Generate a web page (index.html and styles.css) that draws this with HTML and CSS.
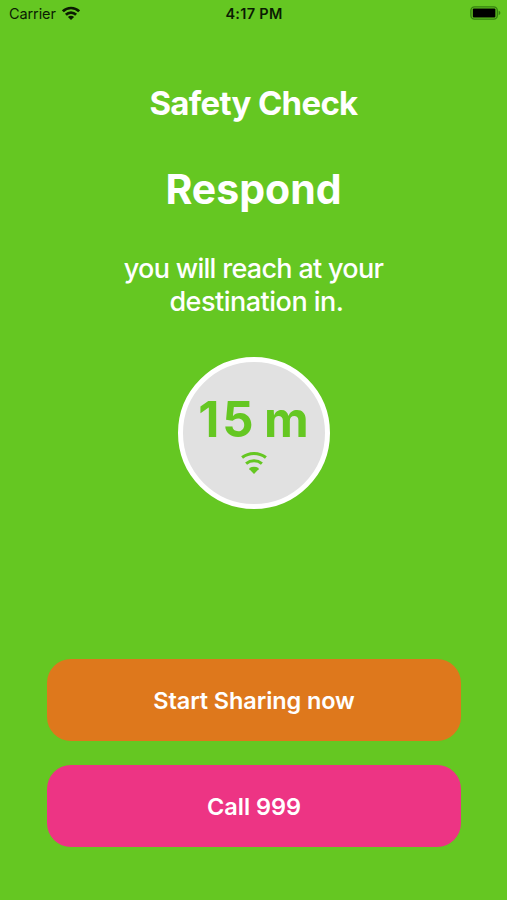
FILE: index.html
```html
<!DOCTYPE html>
<html lang="en">
<head>
  <meta charset="UTF-8">
  <title>Safety Check</title>
  <link rel="stylesheet" href="styles.css">
</head>
<body>
  <div class="status-bar">
    <div class="carrier">
      <span>Carrier</span>
      <svg class="status-wifi" viewBox="0 0 18 14" fill="none" stroke="#0b1c02" stroke-width="2.7">
        <path d="M0.9 5.3a11.6 11.6 0 0 1 16.2 0"/>
        <path d="M3.9 8.8a7.2 7.2 0 0 1 10.2 0"/>
        <path d="M9 14L5.9 11a4.4 4.4 0 0 1 6.2 0z" fill="#0b1c02" stroke="none"/>
      </svg>
    </div>
    <div class="time">4:17 PM</div>
    <div class="battery-cell">
      <svg class="battery" viewBox="0 0 31 14">
        <rect x="0.9" y="0.9" width="26.4" height="12.2" rx="3.6" fill="none" stroke="#35810f" stroke-width="1.4"/>
        <rect x="2.8" y="2.6" width="22.6" height="8.8" rx="1" fill="#000"/>
        <path d="M28.6 4.8q1.8 0.6 1.8 2.2t-1.8 2.2z" fill="#35810f"/>
      </svg>
    </div>
  </div>

  <main>
    <h1>Safety Check</h1>
    <h2>Respond</h2>
    <p>you will reach at your<br><span class="line-2">destination in.</span></p>
    <div class="timer">
      <div class="minutes"><span class="number">15</span> m</div>
      <svg class="timer-wifi" viewBox="0 0 26 22" fill="none" stroke="#65c722" stroke-width="3.1">
        <path d="M1.1 5.6a19.5 19.5 0 0 1 23.8 0"/>
        <path d="M5.1 11.6a12.6 12.6 0 0 1 15.8 0"/>
        <path d="M13 22L8.4 17.2v-1.2q4.6-2.6 9.2 0v1.2z" fill="#65c722" stroke="none"/>
      </svg>
    </div>
  </main>

  <div class="actions">
    <button class="share">Start Sharing now</button>
    <button class="call">Call 999</button>
  </div>
</body>
</html>
```

FILE: styles.css
```css
* {
  box-sizing: border-box;
}
body {
  margin: 0;
  height: 900px;
  display: flex;
  flex-direction: column;
  background: #65c722;
  color: #fff;
  font-family: Inter, "Liberation Sans", sans-serif;
  overflow: hidden;
}
.status-bar {
  display: grid;
  grid-template-columns: 1fr auto 1fr;
  align-items: center;
  height: 26px;
  padding: 0 6px 0 9px;
  color: #0b1c02;
  font-size: 14.5px;
}
.carrier {
  display: flex;
  align-items: center;
  gap: 6px;
  letter-spacing: -0.1px;
}
.status-wifi {
  width: 18px;
  height: 14px;
}
.time {
  margin-right: 2px;
  font-weight: 600;
  letter-spacing: 0.3px;
}
.battery-cell {
  display: flex;
  justify-content: flex-end;
}
.battery {
  width: 31px;
  height: 14px;
}
main {
  display: flex;
  flex-direction: column;
  align-items: center;
  text-align: center;
}
h1 {
  margin: 57px 0 0;
  font-size: 33px;
  line-height: 40px;
  font-weight: 650;
  letter-spacing: -0.7px;
}
h2 {
  margin: 41px 0 0;
  font-size: 41px;
  line-height: 50px;
  font-weight: 700;
}
p {
  margin: 38px 0 0;
  font-size: 27px;
  line-height: 33px;
  font-weight: 450;
  letter-spacing: -0.7px;
}
.line-2 {
  margin-left: 6px;
  letter-spacing: -0.5px;
}
.timer {
  display: flex;
  flex-direction: column;
  align-items: center;
  width: 152px;
  height: 152px;
  margin-top: 39px;
  padding-top: 28px;
  border: 5px solid #fff;
  border-radius: 50%;
  background: #e1e1e1;
}
.minutes {
  color: #65c722;
  font-size: 49px;
  line-height: 60px;
  font-weight: 700;
  white-space: nowrap;
  word-spacing: -4px;
}
.number {
  letter-spacing: 2.8px;
}
.timer-wifi {
  width: 26px;
  height: 22px;
  margin-top: 2px;
}
.actions {
  display: flex;
  flex-direction: column;
  gap: 24px;
  margin: auto 46px 53px 47px;
}
button {
  height: 82px;
  padding: 0;
  border: 0;
  border-radius: 24px;
  color: #fff;
  font-family: inherit;
  font-size: 23.5px;
  font-weight: 600;
}
.share {
  background: #de781c;
  letter-spacing: -0.1px;
}
.call {
  background: #ed3484;
}
```
